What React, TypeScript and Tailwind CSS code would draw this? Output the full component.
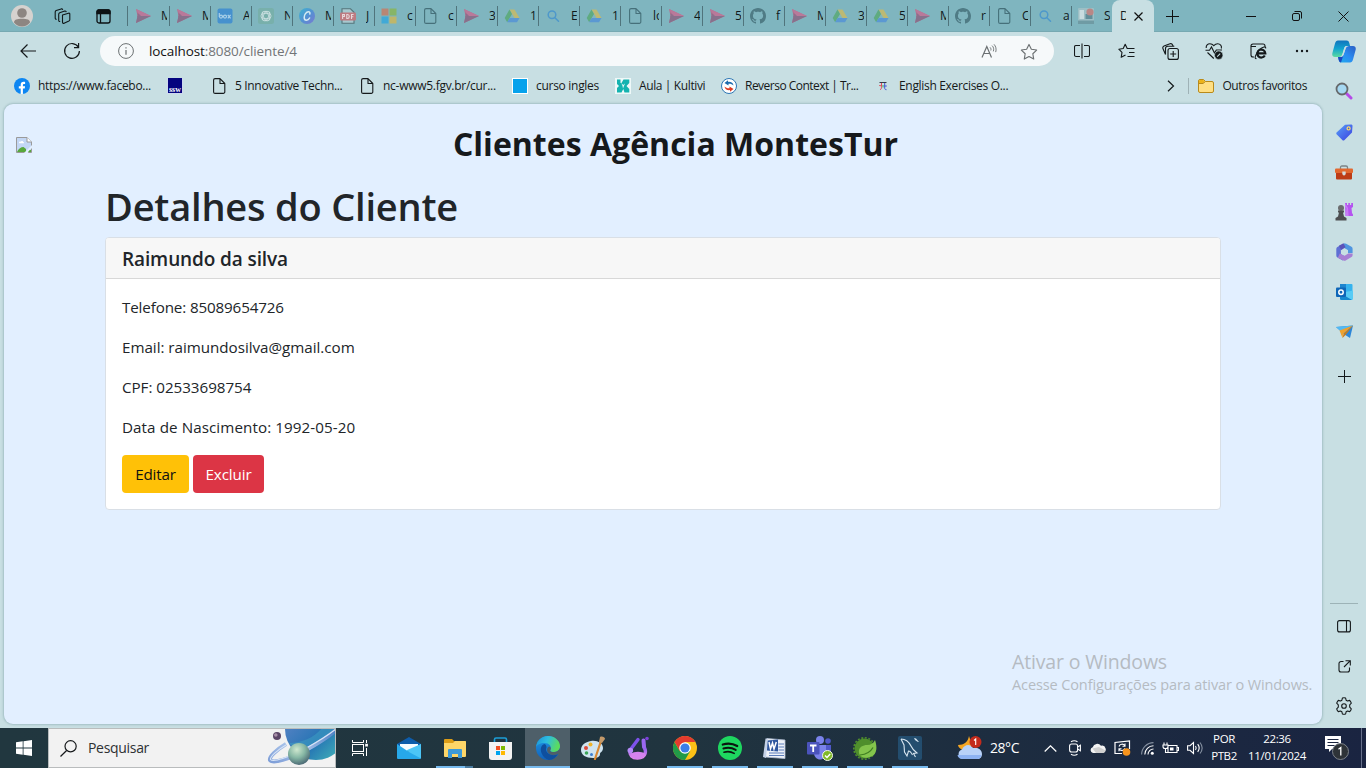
import type { ReactNode } from "react";

/* ---------- favicons ---------- */

const Kite = () => (
  <svg width="16" height="16" viewBox="0 0 16 16">
    <path d="M1 1 16 8 1 15l1.500-7z" fill="#b5708f" />
    <path d="M1 1 16 8H5z" fill="#b9799a" />
    <path d="M1 15 2.500 8 16 8z" fill="#87718c" />
    <path d="M2.500 5 6 7.500 2.500 9z" fill="#8f6f8b" />
  </svg>
);
const Drive = () => (
  <svg width="16" height="16" viewBox="0 0 16 16">
    <path d="M5.500 1.500h5L15.500 10h-5z" fill="#bcb974" />
    <path d="M5.500 1.500 8 6 3.200 14.200.700 10z" fill="#5fab80" />
    <path d="M3.200 14.200 5.600 10h9.900L13 14.200z" fill="#5b98d2" />
  </svg>
);
const Box = () => (
  <svg width="16" height="16" viewBox="0 0 16 16">
    <rect x=".5" y=".5" width="15" height="15" rx="2" fill="#4691ce" />
    <g fill="none" stroke="#a9d0e8" strokeWidth="1.2">
      <path d="M2.300 5v4" />
      <circle cx="4" cy="8.600" r="1.500" />
      <circle cx="8" cy="8.600" r="1.500" />
      <path d="m10.800 6.800 2.800 3.600M13.600 6.800l-2.800 3.600" />
    </g>
  </svg>
);
const Gpt = () => (
  <svg width="16" height="16" viewBox="0 0 16 16">
    <rect width="16" height="16" rx="2.500" fill="#78b0ab" />
    <g fill="none" stroke="#c9dfe0" strokeWidth=".9">
      <rect x="3" y="5.400" width="10" height="5.200" rx="2.500" />
      <rect x="3" y="5.400" width="10" height="5.200" rx="2.500" transform="rotate(60 8 8)" />
      <rect x="3" y="5.400" width="10" height="5.200" rx="2.500" transform="rotate(120 8 8)" />
    </g>
  </svg>
);
const Canva = () => (
  <svg width="16" height="16" viewBox="0 0 16 16">
    <defs>
      <linearGradient id="canva" x1="0" y1="0" x2="1" y2="1">
        <stop offset="0" stopColor="#3fb4cf" />
        <stop offset=".5" stopColor="#5292d3" />
        <stop offset="1" stopColor="#7a7ad2" />
      </linearGradient>
    </defs>
    <circle cx="8" cy="8" r="8" fill="url(#canva)" />
    <path d="M10.800 6c.5-1.400-.2-2.200-1.400-2.200-2.200 0-4.200 3-4.200 5.600 0 1.700.8 2.800 2.200 2.800 1.300 0 2.500-.9 3.200-2.200" fill="none" stroke="#d5ebf2" strokeWidth="1.500" strokeLinecap="round" />
  </svg>
);
const Pdf = () => (
  <svg width="16" height="16" viewBox="0 0 16 16">
    <path d="M2 5V.8h8.500L14 4.300V5M2 12v3.200h12V12" fill="#a7c9cf" stroke="#54747b" strokeWidth="1.100" />
    <rect x="0" y="4.500" width="16" height="8" rx="1" fill="#bd7b81" />
    <g fill="none" stroke="#e8d9dc" strokeWidth="1.100">
      <path d="M2.600 11V6.500h1.800v2H2.600M6.800 6.500v4h.8c2.200 0 2.200-4 0-4zM13.600 6.500h-2.100V11M11.500 8.700h1.800" />
    </g>
  </svg>
);
const MsLogo = () => (
  <svg width="16" height="16" viewBox="0 0 16 16">
    <path d="M.5.500h7v7h-7z" fill="#b88674" />
    <path d="M8.500.500h7v7h-7z" fill="#87b567" />
    <path d="M.5 8.500h7v7h-7z" fill="#41a9d6" />
    <path d="M8.500 8.500h7v7h-7z" fill="#bfb66a" />
  </svg>
);
const Doc = ({ color = "#46707a" }: { color?: string }) => (
  <svg width="16" height="16" viewBox="0 0 16 16" fill="none" stroke={color} strokeWidth="1.100" strokeLinejoin="round">
    <path d="M4.100.600H9l4.800 4.900v8.400a1.500 1.500 0 0 1-1.500 1.500H4.100a1.500 1.500 0 0 1-1.500-1.500V2.100A1.500 1.500 0 0 1 4.100.600zM9 .600v4.900h4.800" />
  </svg>
);
const Search = () => (
  <svg width="16" height="16" viewBox="0 0 16 16" fill="none" stroke="#4e98cb" strokeWidth="1.500" strokeLinecap="round">
    <circle cx="7" cy="6.800" r="3.800" />
    <path d="m9.900 9.700 3.600 3.600" />
  </svg>
);
const Github = () => (
  <svg width="16" height="16" viewBox="0 0 16 16">
    <path fill="#4f7b85" d="M8 0C3.580 0 0 3.580 0 8c0 3.540 2.290 6.530 5.470 7.590.4.070.55-.17.55-.38 0-.19-.01-.82-.01-1.490-2.010.37-2.530-.49-2.690-.94-.09-.23-.48-.94-.82-1.130-.28-.15-.68-.52-.01-.53.63-.01 1.080.58 1.230.82.72 1.210 1.870.87 2.330.66.070-.52.28-.87.51-1.070-1.780-.2-3.640-.89-3.640-3.950 0-.87.31-1.590.82-2.150-.08-.2-.36-1.020.08-2.120 0 0 .67-.21 2.200.82.64-.18 1.320-.27 2-.27s1.360.09 2 .27c1.530-1.040 2.200-.82 2.200-.82.44 1.100.16 1.920.08 2.120.51.56.82 1.270.82 2.150 0 3.070-1.870 3.750-3.650 3.950.29.25.54.73.54 1.480 0 1.070-.01 1.930-.01 2.200 0 .21.15.46.55.38A8.010 8.010 0 0 0 16 8c0-4.420-3.580-8-8-8z" />
  </svg>
);
const Panel = () => (
  <svg width="16" height="16" viewBox="0 0 16 16">
    <rect width="16" height="16" rx="1" fill="#9dbfc5" />
    <path d="M1.500 2h4.500v9H1.500z" fill="#c9dcdf" />
    <path d="M7.500 6h7v5h-7z" fill="#628e99" />
    <path d="M0 12.500h16V16H0z" fill="#6f9ba4" />
    <circle cx="12" cy="4" r="3.600" fill="#b98786" />
  </svg>
);

const tabs: { icon: ReactNode; label: string }[] = [
  { icon: <Kite />, label: "M" },
  { icon: <Kite />, label: "M" },
  { icon: <Box />, label: "A" },
  { icon: <Gpt />, label: "N" },
  { icon: <Canva />, label: "M" },
  { icon: <Pdf />, label: "J" },
  { icon: <MsLogo />, label: "c" },
  { icon: <Doc />, label: "c" },
  { icon: <Kite />, label: "3" },
  { icon: <Drive />, label: "1" },
  { icon: <Search />, label: "E" },
  { icon: <Drive />, label: "1" },
  { icon: <Doc />, label: "lo" },
  { icon: <Kite />, label: "4" },
  { icon: <Kite />, label: "5" },
  { icon: <Github />, label: "f" },
  { icon: <Kite />, label: "M" },
  { icon: <Drive />, label: "3" },
  { icon: <Drive />, label: "5" },
  { icon: <Kite />, label: "M" },
  { icon: <Github />, label: "r" },
  { icon: <Doc />, label: "C" },
  { icon: <Search />, label: "a" },
  { icon: <Panel />, label: "S" },
];

function TabBar() {
  return (
    <div className="flex h-8 shrink-0 bg-[#7fb5bf] shadow-[inset_0_-1px_0_#77a9b2]">
      <div className="flex w-11 items-center justify-center">
        <svg width="22" height="22" viewBox="0 0 22 22">
          <circle cx="11" cy="11" r="11" fill="#d6d2cf" />
          <circle cx="11" cy="8" r="4.800" fill="#8d8682" />
          <path d="M3 17.500c0-3 3-3.800 8-3.800s8 .8 8 3.800A11 11 0 0 1 11 21.500a11 11 0 0 1-8-4z" fill="#8d8682" />
        </svg>
      </div>
      <div className="flex w-9 items-center justify-center">
        <svg width="17" height="17" viewBox="0 0 17 17" fill="none" stroke="#10181a" strokeWidth="1.100" strokeLinejoin="round">
          <path d="m8.500 7 6-1.800c.8-.2 1.300.1 1.300.9v5.600c0 .6-.3 1-.9 1.300l-4.800 2.200c-.9.400-1.600 0-1.600-.9z" />
          <path d="M6.200 13.500c-1 .2-1.500-.3-1.500-1.200V6.200c0-.7.300-1.200 1-1.500l5-1.600c.8-.2 1.400.1 1.500 1" />
          <path d="M2.700 11.200c-1 .2-1.500-.3-1.500-1.200V4c0-.7.300-1.200 1-1.500l5-1.600c.8-.2 1.400.1 1.500 1" />
        </svg>
      </div>
      <div className="flex w-[47px] items-center justify-center pr-px">
        <svg width="15" height="15" viewBox="0 0 15 15" fill="none" stroke="#0d1214" strokeWidth="1.300">
          <rect x="1" y="1" width="13" height="13" rx="2" />
          <path d="M1 2.500A1.500 1.500 0 0 1 2.500 1h10A1.500 1.500 0 0 1 14 2.500V4.500H1z" fill="#0d1214" />
          <path d="M4.500 4.500V14" />
        </svg>
      </div>
      <div className="flex w-[985px] pl-px">
        {tabs.map((t, i) => (
          <div key={i} className="flex h-8 w-[41px] shrink-0 items-center">
            <div className={`h-5 w-px bg-[#50747c] ${i === 0 ? "-ml-px mr-px" : ""}`} />
            <div className="ml-1.5">{t.icon}</div>
            <div className="ml-[10px] w-[6px] overflow-hidden text-xs text-[#10191b]">{t.label}</div>
          </div>
        ))}
      </div>
      <div className="-mr-[2px] flex h-8 w-[42px] items-center rounded-t-lg bg-[#c8dfe3] pl-2">
        <div className="w-[6px] overflow-hidden text-xs text-[#10191b]">D</div>
        <svg className="ml-2" width="9" height="9" viewBox="0 0 9 9" stroke="#111" strokeWidth="1.200">
          <path d="m.5.500 8 8M8.500.500l-8 8" />
        </svg>
      </div>
      <div className="ml-[3px] flex w-[34px] items-center justify-center">
        <svg width="13" height="13" viewBox="0 0 13 13" stroke="#111">
          <path d="M6.500 0v13M0 6.500h13" />
        </svg>
      </div>
      <div className="ml-auto flex">
        <div className="flex w-[46px] items-center justify-center">
          <svg width="10" height="10" viewBox="0 0 10 10" stroke="#111">
            <path d="M0 5.500h10" />
          </svg>
        </div>
        <div className="flex w-[46px] items-center justify-center">
          <svg width="10" height="10" viewBox="0 0 10 10" stroke="#111" fill="none">
            <rect x=".5" y="2.500" width="7" height="7" rx="1.500" />
            <path d="M2.500.500H8a1.500 1.500 0 0 1 1.500 1.500v5.500" />
          </svg>
        </div>
        <div className="flex w-[46px] items-center justify-center">
          <svg width="11" height="11" viewBox="0 0 11 11" stroke="#111">
            <path d="m.5.500 10 10M10.500.500l-10 10" />
          </svg>
        </div>
      </div>
    </div>
  );
}

/* ---------- toolbar ---------- */

const Slot = ({ children }: { children: ReactNode }) => (
  <div className="flex w-11 items-center justify-center">{children}</div>
);

function Toolbar() {
  return (
    <div className="flex h-[38px] shrink-0 items-stretch pl-1.5">
      <Slot>
        <svg width="16" height="14" viewBox="0 0 16 14" fill="none" stroke="#14191b" strokeWidth="1.200">
          <path d="M7.500.500 1 7l6.500 6.500M1 7h15" />
        </svg>
      </Slot>
      <Slot>
        <svg width="18" height="18" viewBox="0 0 18 18" fill="none" stroke="#14191b" strokeWidth="1.200">
          <path d="M15.400 5.200A7.400 7.400 0 1 0 16.400 9M15.600 1v4.600H11" />
        </svg>
      </Slot>
      <div className="mt-1 ml-1.5 flex h-[30px] w-[954px] items-center rounded-full bg-[#f6f9fa] pr-4 pl-[18px]">
        <svg width="16" height="16" viewBox="0 0 16 16" fill="none" stroke="#6b7072">
          <circle cx="8" cy="8" r="7.400" />
          <path d="M8 7v4.800M8 4.200v1.400" strokeWidth="1.200" />
        </svg>
        <span className="ml-[15px] text-[13.5px] tracking-[-0.09px] whitespace-nowrap text-[#727577]">
          <span className="text-[#111]">localhost</span>:8080/cliente/4
        </span>
        <svg className="ml-auto" width="16" height="14" viewBox="0 0 16 14" fill="none" stroke="#6b7072">
          <path d="M1 13.500 5.800 2.500l4.700 11M2.800 9.500h6" strokeWidth="1.200" />
          <path d="M9 3.300c1 1 1.200 2.200.8 3.200M11 1.600c1.700 1.500 2.100 3.700 1.300 5.800M13 .300c1.900 2 2.600 4.800 1.700 7.800" strokeWidth=".9" />
        </svg>
        <svg className="ml-[23px]" width="18" height="17" viewBox="0 0 16 15" fill="none" stroke="#6b7072" strokeLinejoin="round">
          <path d="M8 1.200l2.100 4.300 4.700.7-3.400 3.300.8 4.700L8 12l-4.200 2.200.8-4.700L1.200 6.200l4.700-.7z" />
        </svg>
      </div>
      <div className="ml-[6px] flex">
        <Slot>
          <svg width="16" height="16" viewBox="0 0 16 16" fill="none" stroke="#14191b">
            <path d="M6 2.500H2a1.500 1.500 0 0 0-1.500 1.500v8a1.500 1.500 0 0 0 1.500 1.500H6M10 2.500h4A1.500 1.500 0 0 1 15.500 4v8a1.500 1.500 0 0 1-1.500 1.500H10M8 .500v15" strokeWidth="1.100" />
          </svg>
        </Slot>
        <Slot>
          <svg width="17" height="16" viewBox="0 0 17 16" fill="none" stroke="#14191b" strokeWidth="1.100" strokeLinejoin="round">
            <path d="M9.800 5.500h-.6L7.200 1.200 5.200 5.500.8 6.200l3.200 3.200-.8 4.900 4.300-2.300M9.500 5.500h7M11 9.500h5.500M9.500 13.500h7" />
          </svg>
        </Slot>
        <Slot>
          <svg width="17" height="17" viewBox="0 0 17 17" fill="none" stroke="#14191b" strokeWidth="1.100">
            <rect x="6" y="5.500" width="10.400" height="10.900" rx="2" />
            <path d="M11.200 8v6M8.200 11h6M3.500 11.500 1 5.800c-.5-1.200-.2-2.100 1-2.700L8 .800c1.200-.4 2.100 0 2.600 1.100l.6 1.300M3.500 11.500V5.500A2.300 2.300 0 0 1 5.800 3.200h6.500" />
          </svg>
        </Slot>
        <Slot>
          <svg width="18" height="18" viewBox="0 0 18 18" fill="none" stroke="#14191b" strokeWidth="1.100">
            <path d="M1.200 6C.9 3.500 2.700 1.700 4.900 1.700c1.500 0 2.900.8 3.900 2 1-1.200 2.400-2 3.900-2 2.400 0 4.400 2 3.600 4.800M2.500 10.500l6.300 6M.5 8.300h4L6.500 5l3 6 1.800-3h5.700" />
            <circle cx="13.700" cy="13.200" r="4.200" fill="#14191b" stroke="#c8dfe3" strokeWidth=".6" />
            <path d="m12.200 14.700 3-3" stroke="#c8dfe3" />
          </svg>
        </Slot>
        <Slot>
          <svg width="17" height="17" viewBox="0 0 17 17" fill="none" stroke="#14191b" strokeWidth="1.100">
            <path d="M4 14H3a2 2 0 0 1-2-2V3a2 2 0 0 1 2-2h10a2 2 0 0 1 2 2v1M1 3.500h5" />
            <path d="M14.800 12.500A4 4 0 1 1 15.300 10.300H8" strokeWidth="2.200" />
            <path d="M6.500 15.500c-2.800 1-.8-5 2.700-8.500s7-3.800 6.500-1.500" />
          </svg>
        </Slot>
        <Slot>
          <svg width="14" height="4" viewBox="0 0 14 4" fill="#14191b">
            <circle cx="2" cy="2" r="1.200" />
            <circle cx="7" cy="2" r="1.200" />
            <circle cx="12" cy="2" r="1.200" />
          </svg>
        </Slot>
      </div>
      <div className="flex w-10 items-center justify-center">
        <svg width="24" height="23" viewBox="0 0 24 23">
          <defs>
            <linearGradient id="cp1" x1="0" y1="0" x2="0" y2="1">
              <stop offset="0" stopColor="#1173bd" />
              <stop offset=".5" stopColor="#12a3cf" />
              <stop offset="1" stopColor="#5adba0" />
            </linearGradient>
            <linearGradient id="cp2" x1="1" y1="0" x2="0" y2="1">
              <stop offset="0" stopColor="#2a5fc4" />
              <stop offset=".5" stopColor="#2b8af0" />
              <stop offset="1" stopColor="#1fb0ee" />
            </linearGradient>
          </defs>
          <path d="M6 .500h8.500c1.700 0 2.300.8 2.800 2.500l.8 3h-3c-1.800 0-2.500.8-3 2.500L10.500 14c-.6 1.800-1.500 3-3.300 3H3C.8 17-.2 15.500.4 13L3 3.500C3.500 1.600 4.500.500 6 .500z" fill="url(#cp1)" />
          <path d="M18 22.500H9.500c-1.700 0-2.300-.8-2.800-2.500L6 17h2.500c1.800 0 2.700-.8 3.200-2.500L13.500 9c.6-1.800 1.500-3 3.300-3H21c2.200 0 3.200 1.500 2.600 4L21 19.500c-.5 1.900-1.500 3-3 3z" fill="url(#cp2)" />
          <path d="M6 17h2c2 0 3-.8 3.600-2.500l.6-1.800L9 22.400c-1.300-.2-1.900-1-2.300-2.400z" fill="#1b49c0" />
          <path d="M15 6h2c-2 0-3 1-3.600 3l-1.800 5.500c-.5 1.500-1.200 2.300-2.600 2.500H7.300c1.700 0 2.600-1.200 3.200-3l1.600-5.500C12.600 6.800 13.300 6 15 6z" fill="#c8dfe3" />
        </svg>
      </div>
    </div>
  );
}

/* ---------- bookmarks ---------- */

const Bookmark = ({ icon, children }: { icon: ReactNode; children?: ReactNode }) => (
  <div className="flex items-center gap-2 whitespace-nowrap">
    {icon}
    {children}
  </div>
);

function Bookmarks() {
  return (
    <div className="flex h-[34px] shrink-0 items-center pb-[2px] pl-[14px] text-xs text-[#16191a]">
      <Bookmark
        icon={
          <svg width="16" height="16" viewBox="0 0 16 16">
            <circle cx="8" cy="8" r="8" fill="#0d86f2" />
            <path d="M6.700 16v-5.400H4.800V8.300h1.900V6.700c0-2 1-3 2.900-3 .6 0 1.200.1 1.500.2v2h-1c-.9 0-1.200.4-1.200 1.200v1.200h2.200l-.4 2.300H8.900V16z" fill="#fff" />
          </svg>
        }
      >
        <span className="w-[129px] tracking-[-0.3px]">https://www.facebo...</span>
      </Bookmark>
      <Bookmark
        icon={
          <div className="flex size-4 items-end justify-center border-x border-b border-[#cfd8ef] bg-[#04047f] font-['Liberation_Serif',serif] text-[8px] leading-[7px] font-bold text-white">
            ssw
          </div>
        }
      />
      <div className="ml-7">
        <Bookmark icon={<Doc color="#15191b" />}>
          <span className="w-[124px] tracking-[-0.33px]">5 Innovative Techn...</span>
        </Bookmark>
      </div>
      <Bookmark icon={<Doc color="#15191b" />}>
        <span className="w-[129px] tracking-[-0.28px]">nc-www5.fgv.br/cur...</span>
      </Bookmark>
      <Bookmark icon={<div className="size-4 border border-white bg-[#06a2ec]" />}>
        <span className="w-[79px] tracking-[-0.29px]">curso ingles</span>
      </Bookmark>
      <Bookmark
        icon={
          <svg width="16" height="16" viewBox="0 0 16 16">
            <path d="M0 0h16v16H0z" fill="#eef8f8" />
            <path d="M2 1.500H5.500V5h1L8.500 1.500h5.800V5L11.500 8l2.800 3v3.500H9.500L8.300 11l-1.800 3.500H2V10l2-2-2-2z" fill="#14b3b0" />
            <path d="m6.300 5 1.900 2L10 5.500 8.800 8.500 8 10.500 7.500 8z" fill="#e5f7f6" />
          </svg>
        }
      >
        <span className="w-[82px] tracking-[-0.38px]">Aula | Kultivi</span>
      </Bookmark>
      <Bookmark
        icon={
          <svg width="16" height="16" viewBox="0 0 16 16">
            <circle cx="8" cy="8" r="7.500" fill="#fff" stroke="#2c76b4" />
            <path d="M12.500 7.500c-.3-2.700-2.500-3.900-5.500-3.600V2.200L3.500 5l4 2.500V5.800c2-.2 3.500.3 5 1.700z" fill="#1d6cae" />
            <path d="M3.500 8.500c.3 2.700 2.500 3.900 5.500 3.600v1.700l3.500-2.800-4-2.500v1.700c-2 .2-3.500-.3-5-1.700z" fill="#de3b22" />
          </svg>
        }
      >
        <span className="w-[130px] tracking-[-0.52px]">Reverso Context | Tr...</span>
      </Bookmark>
      <Bookmark
        icon={
          <svg width="16" height="16" viewBox="0 0 16 16" fill="none">
            <path d="M4.500 4.500h7" stroke="#353b46" />
            <path d="M6.500 5v3.500c0 2-.4 3-1.500 3.200M4.200 7.500l3 .5" stroke="#de4b57" />
            <path d="M9.700 5v5c0 1.200.5 1.700 1.800 1.700M8.800 8h3" stroke="#4656d6" />
            <path d="M8 7v2.500" stroke="#35b56b" />
          </svg>
        }
      >
        <span className="tracking-[-0.32px]">English Exercises O...</span>
      </Bookmark>
      <div className="ml-auto flex items-center pr-[15px]">
        <svg width="8" height="12" viewBox="0 0 8 12" fill="none" stroke="#14191b" strokeWidth="1.200">
          <path d="m1 .700 5.500 5.300L1 11.300" />
        </svg>
        <div className="mr-[9px] ml-[13px] h-4 w-px bg-[#9fb2b6]" />
        <svg width="16" height="14" viewBox="0 0 16 14">
          <path d="M.5 2A1.500 1.500 0 0 1 2 .500h3.500L7.500 2.500H14A1.500 1.500 0 0 1 15.500 4v8a1.500 1.500 0 0 1-1.500 1.500H2A1.500 1.500 0 0 1 .5 12z" fill="#ffdf83" stroke="#b98a1a" />
          <path d="M1 2c0-.7.500-1 1-1h3.300l1.500 1.500-1.500 1.600H1z" fill="#edb319" />
          <path d="M.5 4.500H5l2.500-2" fill="none" stroke="#b98a1a" />
        </svg>
        <span className="ml-2 tracking-[-0.4px] whitespace-nowrap">Outros favoritos</span>
      </div>
    </div>
  );
}

/* ---------- page ---------- */

const details = [
  { text: "Telefone: 85089654726", cls: "tracking-[-0.14px]" },
  { text: "Email: raimundosilva@gmail.com", cls: "tracking-[-0.03px]" },
  { text: "CPF: 02533698754", cls: "tracking-[-0.04px]" },
  { text: "Data de Nascimento: 1992-05-20", cls: "tracking-[0.08px]" },
];

function Page() {
  return (
    <main className="relative ml-1 flex h-[620px] w-[1318px] flex-col rounded-[9px] bg-[#e2efff] text-[#212529] shadow-[0_0_2px_1px_rgba(120,155,162,0.45)]">
      <div className="flex h-20 items-center">
        <svg className="mt-[2px] ml-3 shrink-0" width="16" height="16" viewBox="0 0 16 16">
          <path d="M.5.500h10.500l4.500 4.500v10.500H.5z" fill="#c3d7f5" stroke="#9a9a9a" />
          <path d="M11 .500V5h4.500" fill="#fff" stroke="#9a9a9a" />
          <path d="M3 5.800c0-1 1-1.400 1.600-1.100.6-1.200 2.400-1 2.600.2.900 0 1.200.9.500 1.400H3.300z" fill="#fff" />
          <path d="M1 15c1.500-3.500 4-5 6.500-5l2.500 2v3z" fill="#58a83c" />
          <path d="M16.500 7.500 7.500 16.500h3.800l5.200-6z" fill="#e2efff" />
          <path d="M12 15l2-2.200 1 .2v2z" fill="#58a83c" />
        </svg>
        <h1 className="w-[1287px] text-center text-[32px] leading-10 font-bold tracking-[0.02px] whitespace-nowrap text-[#16191c]">
          Clientes Agência MontesTur
        </h1>
      </div>
      <div className="ml-[101px] w-[1116px]">
        <h2 className="h-[53px] text-[38px] leading-[45px] font-semibold tracking-[-0.2px]">Detalhes do Cliente</h2>
        <section className="flex h-[273px] flex-col overflow-hidden rounded border border-[#d9dfe6] bg-white">
          <h3 className="flex h-[41px] items-center border-b border-[#d8d8d8] bg-[#f7f7f7] px-4 pt-[2px] text-[19px] font-semibold tracking-[-0.11px]">
            Raimundo da silva
          </h3>
          <div className="flex flex-col gap-4 p-4 text-[15.2px] leading-6">
            {details.map((d) => (
              <p key={d.text} className={d.cls}>
                {d.text}
              </p>
            ))}
            <div className="flex gap-1">
              <button className="h-[38px] w-[67px] rounded bg-[#ffc107] tracking-[-0.2px] text-[#111]">Editar</button>
              <button className="h-[38px] w-[71px] rounded bg-[#dc3545] tracking-[-0.12px] text-white">Excluir</button>
            </div>
          </div>
        </section>
      </div>
      <div className="absolute top-[545px] left-[1008px] whitespace-nowrap text-[#b5bbc2]">
        <div className="text-[19.5px] leading-[26px] tracking-[-0.16px]">Ativar o Windows</div>
        <div className="text-[14.5px] leading-5 tracking-[-0.11px]">Acesse Configurações para ativar o Windows.</div>
      </div>
    </main>
  );
}

/* ---------- sidebar ---------- */

const SideSlot = ({ children }: { children: ReactNode }) => (
  <div className="flex h-10 items-center justify-center">{children}</div>
);

function Sidebar() {
  return (
    <aside className="flex w-11 flex-col">
      <div className="flex h-[42px] items-center justify-center">
        <svg width="18" height="18" viewBox="0 0 18 18">
          <path d="m11.500 11.500 4.500 4.500" stroke="#b54ae8" strokeWidth="3" strokeLinecap="round" />
          <circle cx="7" cy="7" r="5.500" fill="#a5d8f2" stroke="#66696b" strokeWidth="1.800" />
        </svg>
      </div>
      <SideSlot>
        <svg width="17" height="17" viewBox="0 0 17 17">
          <defs>
            <linearGradient id="tag" x1="0" y1="0" x2="1" y2="1">
              <stop offset="0" stopColor="#59a0f7" />
              <stop offset="1" stopColor="#3a3fe0" />
            </linearGradient>
          </defs>
          <path d="M9 .800 15 .500c1 0 1.500.5 1.500 1.500L16 8.500 8.500 16c-.7.700-1.500.7-2.200 0L.8 10.500c-.7-.7-.7-1.500 0-2.200z" fill="url(#tag)" />
          <circle cx="12.600" cy="4.400" r="1.500" fill="#3b5bd8" stroke="#ffd96b" strokeWidth="1.300" />
        </svg>
      </SideSlot>
      <SideSlot>
        <svg width="18" height="15" viewBox="0 0 18 15">
          <path d="M5.500 4V2.500c0-1 .5-1.500 1.500-1.500h4c1 0 1.500.5 1.500 1.500V4" fill="none" stroke="#7b8486" strokeWidth="1.300" />
          <rect x="0" y="3.500" width="18" height="4.500" rx="1" fill="#e2682f" />
          <path d="M1 8h16v5.500a1 1 0 0 1-1 1H2a1 1 0 0 1-1-1z" fill="#bd3c16" />
          <path d="M7.300 6.500h3.400v2.800L9 10.700 7.300 9.300z" fill="#d5dadb" />
        </svg>
      </SideSlot>
      <SideSlot>
        <svg width="18" height="18" viewBox="0 0 18 18">
          <path d="M10 0h2v2h1.300V0h1.600v2h1.300V0H18v4l-1.500 1 .5 5 1 1.500v1.500h-7.500z" fill="#b553f0" />
          <path d="M10 0v4l1.500 1-.8 8h3L13 5z" fill="#c77bf7" />
          <circle cx="6" cy="5" r="3" fill="#6a6c6e" />
          <path d="M3 7.500h6V9.500H8l1 4 2.500 1.500v2.500H.5V15L3 13.500l1-4H3z" fill="#4d4f51" />
        </svg>
      </SideSlot>
      <SideSlot>
        <svg width="17" height="18" viewBox="0 0 17 18" fill="none" strokeWidth="4.600" strokeLinejoin="round">
          <path d="M8 15.500 2.600 12.400V6L6.500 3.600" stroke="#5f6fd4" />
          <path d="M7.500 2.600 9 2.700 14.300 5.800V10" stroke="#4f95e0" />
          <path d="M2.800 12.600 8.500 15.500 14.300 12V10.500" stroke="#a77fd4" />
          <path d="M4 4.800 8.500 2.300" stroke="#5a52b8" />
        </svg>
      </SideSlot>
      <SideSlot>
        <svg width="17" height="16" viewBox="0 0 17 16">
          <path d="M4 0h11.500a1 1 0 0 1 1 1v8H4z" fill="#36b3ee" />
          <path d="M4 0h6v5H4z" fill="#1d85cf" />
          <path d="M4 9 17 6.500V14.500a1.500 1.500 0 0 1-1.500 1.500h-10A1.500 1.500 0 0 1 4 14.500z" fill="#57cbf5" />
          <path d="m4 9 12 7H5.500A1.500 1.500 0 0 1 4 14.500z" fill="#1588cf" />
          <rect x="0" y="3.500" width="10" height="9.500" rx="1" fill="#0e66b8" />
          <circle cx="5" cy="8.200" r="2.200" fill="none" stroke="#fff" strokeWidth="1.500" />
        </svg>
      </SideSlot>
      <SideSlot>
        <svg width="17" height="14" viewBox="0 0 17 14">
          <path d="M0 2 17 .500 14 13 8.500 9.500z" fill="#2c86d8" />
          <path d="M0 2 17 .500 4.500 6z" fill="#52baf4" />
          <path d="M3.500 5.500 17 .500 7 9l-.5 4z" fill="#f0a22c" />
          <path d="M17 .500 7.500 9 6.500 13l3-3z" fill="#c97c1a" />
        </svg>
      </SideSlot>
      <div className="flex h-12 items-center justify-center">
        <svg width="13" height="13" viewBox="0 0 13 13" stroke="#14191b">
          <path d="M6.500 0v13M0 6.500h13" />
        </svg>
      </div>
      <div className="mx-2 mt-auto h-px bg-[#9db3b7]" />
      <div className="flex flex-col pt-[2px] pb-[2px]">
        <SideSlot>
          <svg width="14" height="13" viewBox="0 0 14 13" fill="none" stroke="#14191b" strokeWidth="1.100">
            <rect x=".6" y=".6" width="12.800" height="11.300" rx="2" />
            <path d="M9.500.6v11.300" />
          </svg>
        </SideSlot>
        <SideSlot>
          <svg width="13" height="13" viewBox="0 0 13 13" fill="none" stroke="#14191b" strokeWidth="1.100">
            <path d="M5.500 1.500H3A2 2 0 0 0 1 3.500v6.500a2 2 0 0 0 2 2h6.500a2 2 0 0 0 2-2V7.500M7.500.700h4.800v4.800M12.300.700 6 7" />
          </svg>
        </SideSlot>
        <SideSlot>
          <svg width="18" height="18" viewBox="0 0 18 18" fill="none" stroke="#14191b" strokeWidth="1.100" strokeLinejoin="round">
            <circle cx="9" cy="9" r="2.300" />
            <path d="M7.400 1c1-.3 2.200-.3 3.200 0l.5 2.200 1.400.8 2.200-.6c.8.800 1.300 1.700 1.600 2.800L14.700 7.800v2.400l1.600 1.600c-.3 1.100-.8 2-1.600 2.800l-2.200-.6-1.400.8-.5 2.200c-1 .3-2.200.3-3.200 0l-.5-2.200-1.400-.8-2.200.6c-.8-.8-1.300-1.700-1.600-2.800l1.600-1.600V7.800L1.700 6.200c.3-1.100.8-2 1.600-2.800l2.200.6 1.400-.8z" />
          </svg>
        </SideSlot>
      </div>
    </aside>
  );
}

/* ---------- taskbar ---------- */

const TaskIcon = ({ children, cls = "", running = false }: { children: ReactNode; cls?: string; running?: boolean }) => (
  <div className={`flex w-[45px] shrink-0 flex-col items-center justify-between ${cls}`}>
    <div className="flex h-[38px] items-center pt-[2px]">{children}</div>
    {running && <div className="h-[2px] w-9 bg-[#76b9ed]" />}
  </div>
);

function Taskbar() {
  return (
    <footer className="flex h-10 shrink-0 items-stretch overflow-hidden bg-gradient-to-r from-[#21373f] via-[#20343f] to-[#1a2441] text-white">
      <div className="flex w-12 shrink-0 items-center justify-center">
        <svg width="16" height="16" viewBox="0 0 16 16" fill="#fff">
          <path d="M0 2.200 6.700 1.300v6.300H0zM7.500 1.200 16 0v7.600H7.500zM0 8.400h6.700v6.300L0 13.800zM7.500 8.400H16V16l-8.500-1.200z" />
        </svg>
      </div>
      <div className="flex w-[288px] shrink-0 items-center overflow-hidden border border-[#b9bcbd] bg-[#f2f2f2]">
        <svg className="ml-[11px]" width="17" height="17" viewBox="0 0 17 17" fill="none" stroke="#16191b" strokeWidth="1.200">
          <circle cx="10.600" cy="6.300" r="5.600" />
          <path d="M6.600 10.500.500 16.500" />
        </svg>
        <span className="ml-[11px] text-sm tracking-[-0.31px] text-[#2d3133]">Pesquisar</span>
        <svg className="ml-auto -mr-px" width="70" height="40" viewBox="0 0 70 40">
          <defs>
            <linearGradient id="planet" x1="0" y1="0" x2="1" y2="1">
              <stop offset=".3" stopColor="#4a7fc0" />
              <stop offset=".6" stopColor="#2574b4" />
              <stop offset="1" stopColor="#48c0b8" />
            </linearGradient>
            <linearGradient id="ring" x1="0" y1="1" x2="1" y2="0">
              <stop offset="0" stopColor="#7f9fd8" />
              <stop offset=".4" stopColor="#a9c3ea" />
              <stop offset="1" stopColor="#3f76bf" />
            </linearGradient>
            <radialGradient id="moon" cx=".4" cy=".3" r=".75">
              <stop offset="0" stopColor="#cfe8cf" />
              <stop offset=".5" stopColor="#86b7a4" />
              <stop offset="1" stopColor="#44606f" />
            </radialGradient>
          </defs>
          <circle cx="50" cy="1" r="31" fill="url(#planet)" />
          <path d="M56 0h14v4L40 22c-8 0-14-3-17-7C36 15 49 9 56 0z" fill="#3fa2c4" opacity=".5" />
          <path d="M20 16C10 22 3 29 4 32c2 4 20-1 36-10S65 7 72 0" fill="none" stroke="url(#ring)" strokeWidth="4" />
          <path d="M20 17C11 22 4 29 4.500 31.500c2 3 19-2 35-11S64 6 71 0" fill="none" stroke="#d6e3f6" strokeWidth="1.200" />
          <circle cx="33" cy="26" r="11" fill="url(#moon)" />
          <circle cx="11" cy="8" r="4" fill="#5b4667" />
          <circle cx="9.800" cy="7" r="1.800" fill="#a98fa8" />
        </svg>
      </div>
      <div className="flex w-12 shrink-0 items-center justify-center">
        <svg width="16" height="16" viewBox="0 0 16 16" fill="none" stroke="#fff">
          <path d="M.5 0v2.500h11V0M.5 16v-2.500h11V16" />
          <rect x=".5" y="4.500" width="11" height="7" />
          <path d="M14.500 0v3M14.500 8V16" />
          <path d="M13.200 3.800h2.700v2.700h-2.700z" fill="#fff" stroke="none" />
        </svg>
      </div>
      <TaskIcon cls="ml-[3px] pr-[1px]">
        <svg width="24" height="22" viewBox="0 0 24 22">
          <path d="M0 7 12 0l12 7v3H0z" fill="#0d5cab" />
          <path d="M3 7h18v7H3z" fill="#f5fbff" />
          <path d="M0 7l12 8 12-8v14a1 1 0 0 1-1 1H1a1 1 0 0 1-1-1z" fill="#27a8ea" />
          <path d="M24 7v14.500L9 13.500z" fill="#4cc5f6" />
        </svg>
      </TaskIcon>
      <div className="flex w-[45px] shrink-0 flex-col items-center justify-between">
        <div className="flex h-[38px] items-center pt-[2px]">
          <svg width="22" height="19" viewBox="0 0 22 19">
            <path d="M0 1a1 1 0 0 1 1-1h7l2 2h11a1 1 0 0 1 1 1v4H0z" fill="#dd9d17" />
            <path d="M0 4h9l2-2h10a1 1 0 0 1 1 1v14a1 1 0 0 1-1 1H1a1 1 0 0 1-1-1z" fill="#fed668" />
            <path d="M4 19v-8a1 1 0 0 1 1-1h12a1 1 0 0 1 1 1v8h-4v-4H8v4z" fill="#3d9ad8" />
          </svg>
        </div>
        <div className="flex h-[2px]">
          <div className="w-[29px] bg-[#76b9ed]" />
          <div className="w-2 bg-[#4a7b9f]" />
        </div>
      </div>
      <TaskIcon cls="ml-px">
        <svg width="23" height="23" viewBox="0 0 23 23">
          <path d="M5.500 6V2.500C5.500 1.500 6 1 7 1h9c1 0 1.500.5 1.500 1.500V6" fill="none" stroke="#1d9fd8" strokeWidth="1.600" />
          <path d="M0 5h23v15a3 3 0 0 1-3 3H3a3 3 0 0 1-3-3z" fill="#f3f3f3" />
          <path d="M7 9h4v4H7z" fill="#f25022" />
          <path d="M12 9h4v4h-4z" fill="#7fba00" />
          <path d="M7 14h4v4H7z" fill="#00a4ef" />
          <path d="M12 14h4v4h-4z" fill="#ffb900" />
        </svg>
      </TaskIcon>
      <div className="ml-[2px] flex w-[45px] shrink-0 flex-col items-center justify-between bg-[#4e5f69]">
        <div className="flex h-[38px] items-center pt-[2px]">
          <svg width="24" height="24" viewBox="0 0 24 24">
            <defs>
              <linearGradient id="edgeTop" x1="0" y1="0" x2="1" y2=".3">
                <stop offset="0" stopColor="#1a8fd8" />
                <stop offset=".5" stopColor="#2dbde0" />
                <stop offset="1" stopColor="#5bdb5e" />
              </linearGradient>
              <linearGradient id="edgeBody" x1="0" y1="0" x2="0" y2="1">
                <stop offset="0" stopColor="#1f9ae8" />
                <stop offset="1" stopColor="#1160b8" />
              </linearGradient>
            </defs>
            <circle cx="12" cy="12" r="12" fill="url(#edgeBody)" />
            <path d="M0 11C1 4 6 0 12 0c7 0 12 5 12 10 0 4-3 6-6.500 6-3 0-4-1.200-3-2.700C16 10.500 13 7 8.500 7 4 7 1 9 0 11z" fill="url(#edgeTop)" />
            <path d="M8.500 8C5 9 4 13 5.500 17c1.300 3.500 4 6 7.500 7 4-.3 7-2.500 9-6-2 1.200-4.500 1.500-7 .8-4-1.200-6-4-4.500-7.800C10 9.500 10 8.300 8.500 8z" fill="#0f4f9e" />
            <path d="M24 12v6l-2 0c-2 1-4.800 1.500-7.500.5-2.500-1-4-3.500-3.300-5.800.3-1.200 1.300-2 2.300-2.200 1.400 1 1.700 2 1 3.200-1 1.300.2 2.400 3.200 2.400 3.500 0 5.700-2 6.300-4.100z" fill="#4e5f69" />
          </svg>
        </div>
        <div className="h-[2px] w-full bg-[#76b9ed]" />
      </div>
      <TaskIcon>
        <svg width="24" height="24" viewBox="0 0 24 24">
          <path d="M10 5c6-1 12 2 12 7 0 4-3 4-3 6 0 3-3 4-7 4C5 22 0 19 0 14S4 6 10 5z" fill="#cfe4f0" />
          <circle cx="5" cy="12" r="2" fill="#dd4a39" />
          <circle cx="9.500" cy="8.500" r="2" fill="#f0b429" />
          <circle cx="5.500" cy="17" r="1.800" fill="#3ba557" />
          <circle cx="10.500" cy="18.500" r="1.500" fill="#3b7fd0" />
          <path d="M20 5 14 23" stroke="#d88a34" strokeWidth="2.200" strokeLinecap="round" />
          <path d="M19 1c2-1 5 0 5 2l-3 4-3-1z" fill="#c3996a" />
        </svg>
      </TaskIcon>
      <TaskIcon>
        <svg width="22" height="24" viewBox="0 0 22 24" fill="none" strokeLinecap="round">
          <defs>
            <linearGradient id="flask" x1="0" y1="0" x2="0" y2="1">
              <stop offset="0" stopColor="#8a5cf0" />
              <stop offset="1" stopColor="#e58aec" />
            </linearGradient>
          </defs>
          <path d="M17 11c2 3 3 11-6.500 11C5 22 2.500 19 3 15" stroke="url(#flask)" strokeWidth="3.500" />
          <path d="M3.500 18c4-3 11-3 15 0-1 3.500-4 5-8 5s-6.500-2-7-5z" fill="#d583ee" />
          <path d="M3.500 13.500 11 3.500" stroke="#7d52ea" strokeWidth="3.400" />
          <path d="m16.500 4.500.5 6" stroke="#9a68f0" strokeWidth="4" />
          <circle cx="3.300" cy="14.500" r="2.800" fill="#b58af8" />
          <circle cx="20" cy="2.500" r="1.800" fill="#7b3fd8" />
        </svg>
      </TaskIcon>
      <TaskIcon running cls="ml-[2px]">
        <svg width="24" height="24" viewBox="0 0 24 24">
          <circle cx="12" cy="12" r="12" fill="#fbc116" />
          <path d="M6.800 15 1.600 6A12 12 0 0 0 12 24l5.200-9z" fill="#229a48" />
          <path d="M1.600 6A12 12 0 0 1 22.400 6H12L6.800 15z" fill="#e33b2e" />
          <circle cx="12" cy="12" r="5.800" fill="#fff" />
          <circle cx="12" cy="12" r="4.600" fill="#3b7de8" />
        </svg>
      </TaskIcon>
      <TaskIcon running>
        <svg width="24" height="24" viewBox="0 0 24 24">
          <circle cx="12" cy="12" r="12" fill="#1ed760" />
          <g fill="none" stroke="#0b1510" strokeLinecap="round">
            <path d="M4.800 8.500c4.800-1.400 10.300-.9 14.400 1.500" strokeWidth="2.300" />
            <path d="M5.400 12.500c4.200-1.200 8.800-.7 12.300 1.400" strokeWidth="1.900" />
            <path d="M6 16.200c3.600-1 7.200-.6 10.200 1.200" strokeWidth="1.600" />
          </g>
        </svg>
      </TaskIcon>
      <TaskIcon running>
        <svg width="23" height="23" viewBox="0 0 23 23">
          <path d="M4 1.500 22 3v18.500L2 20z" fill="#eef2f8" stroke="#aebbd0" strokeWidth=".8" />
          <path d="M15.500 7H21M15.500 10H21M15.500 13H21M6 16h15M6 18.500h15" stroke="#5b7dbb" />
          <path d="M4.500 3.500 15 2.500V14.500L4 13.500z" fill="#2f579f" />
          <path d="m6 5 1.500 7L9.500 6l1.500 6 2.300-7" fill="none" stroke="#fff" strokeWidth="1.500" />
          <path d="M0 20 2.500 1.500 4.500 1.500 3 21z" fill="#c4d1e6" />
        </svg>
      </TaskIcon>
      <TaskIcon running>
        <svg width="26" height="25" viewBox="0 0 26 25">
          <circle cx="13" cy="4" r="4" fill="#7b83eb" />
          <circle cx="21" cy="5" r="2.800" fill="#5059c9" />
          <path d="M17 9h7v7c0 3-2 5-5 5h-2z" fill="#5059c9" />
          <path d="M7 9h12v8c0 4-3 6.500-6 6.500S7 21 7 17z" fill="#7b83eb" />
          <rect x="0" y="6" width="12.500" height="12.500" rx="1" fill="#4b53bc" />
          <path d="M3 9.500h6.500M6.200 9.500V16" stroke="#fff" strokeWidth="1.800" />
          <circle cx="20.500" cy="19.500" r="5" fill="#81b928" stroke="#f4f8ee" />
          <path d="m18 19.500 2 2 3.200-3.500" fill="none" stroke="#fff" strokeWidth="1.500" />
        </svg>
      </TaskIcon>
      <TaskIcon running>
        <svg width="24" height="24" viewBox="0 0 24 24">
          <circle cx="11.500" cy="12.500" r="10" fill="#4f8f2c" />
          <circle cx="11.500" cy="12.500" r="10.700" fill="none" stroke="#4f8f2c" strokeWidth="1.600" strokeDasharray="2 1.600" />
          <path d="M22 4c3 9 1.500 16-7 17.500-4 .8-7.500-.5-8.500-3C4 12 9.500 9 14 9c4 0 6.500-1.500 8-5z" fill="#83c44c" />
          <path d="M7 19c6-.5 10.500-3 13-7.500" fill="none" stroke="#3f7d22" strokeWidth="1.200" />
        </svg>
      </TaskIcon>
      <TaskIcon running>
        <svg width="24" height="24" viewBox="0 0 24 24">
          <rect width="24" height="24" rx="2" fill="#234d6e" />
          <path d="M3 3c4 0 8 3 10 7 1.500 3.500 3.500 5 6 7l-3.500.500 2 3.500M3 3l3 6 .5 7 2.500 4 1.500-5c2 0 3 2 4 4" fill="none" stroke="#d8e6f0" strokeWidth="1.100" />
          <path d="m16 2 2 .500L21 6l-1.500-.300L17 4z" fill="#d8e6f0" />
        </svg>
      </TaskIcon>
      <div className="ml-auto flex items-center">
        <svg width="26" height="24" viewBox="0 0 26 24">
          <path d="M12 0c-1 6-5 9-11 9 1 6 12 8 14 0z" fill="#f5a623" />
          <path d="M5 23a5 5 0 0 1 0-9.500C7 9 13 7 16 12c5-1 9 2 9 6 0 3-2 5-4.500 5z" fill="#b9d2f8" />
          <path d="M5 23a5 5 0 0 1-4.500-4h24c-.5 2.500-2 4-4 4z" fill="#8eb3f2" />
          <circle cx="18.500" cy="6" r="6" fill="#c42b1c" />
          <path d="M17 4.500 18.700 3v6" fill="none" stroke="#fff" strokeWidth="1.100" />
        </svg>
        <span className="ml-[7px] w-[30px] text-sm tracking-[-0.45px]">28°C</span>
        <svg className="ml-[24px]" width="13" height="7" viewBox="0 0 13 7" fill="none" stroke="#fff" strokeWidth="1.200">
          <path d="m.7 6.500 5.800-5.700 5.800 5.700" />
        </svg>
        <svg className="ml-3" width="12" height="16" viewBox="0 0 12 16" fill="none" stroke="#fff" strokeWidth="1.100">
          <rect x=".6" y="4" width="8" height="8" rx="2" />
          <path d="m8.600 7 2.800-1.800v5.600L8.600 9M2 1.800c2-1.300 4.500-1.300 6.500 0M2 14.200c2 1.300 4.500 1.300 6.500 0" />
        </svg>
        <svg className="ml-[9px]" width="16" height="10" viewBox="0 0 16 10">
          <path d="M3 10a3 3 0 0 1-.3-5.800A4.700 4.700 0 0 1 11 2.800a3.700 3.700 0 0 1 2 7.200z" fill="#f3f3f3" />
          <path d="M6 10 2.500 5.500 9 4l6.500 3.500A3 3 0 0 1 13 10z" fill="#cfcfcf" />
        </svg>
        <svg className="ml-2" width="17" height="16" viewBox="0 0 17 16" fill="none">
          <path d="M8 13.500H1v-11L15.500.800V9" stroke="#fff" strokeWidth="1.200" />
          <path d="M5 6.500a3.200 3.200 0 0 1 5.800-.8M11 3.500v2.700H8.500M10.800 8.300A3.200 3.200 0 0 1 5 9M5 11.300V8.800h2.500" stroke="#fff" strokeWidth="1.100" />
          <circle cx="12.500" cy="12" r="3.800" fill="#f7941d" />
        </svg>
        <svg className="ml-[10px]" width="13" height="13" viewBox="0 0 13 13" fill="none" strokeWidth="1.100">
          <path d="M.6 12.500C.6 6 6 .6 12.500.6" stroke="#8590a0" />
          <path d="M3.800 12.500c0-4.800 3.900-8.700 8.700-8.700M7 12.500C7 9.500 9.500 7 12.500 7" stroke="#fff" />
          <circle cx="11.300" cy="11.300" r="1.500" fill="#fff" />
        </svg>
        <svg className="ml-2" width="17" height="13" viewBox="0 0 17 13" fill="none" stroke="#fff" strokeWidth="1.100">
          <path d="M6 3.500h9v7H6zM15.500 5.500h1v3h-1M2 .500V3M5 .500V3M1 3h5v1.500A2 2 0 0 1 4 6.500H3A2 2 0 0 1 1 4.500zM3.500 6.500v4H6" />
          <path d="M8 5.500h3.500v3H8z" fill="#fff" stroke="none" />
        </svg>
        <svg className="ml-2" width="16" height="14" viewBox="0 0 16 14" fill="none" stroke="#fff" strokeWidth="1.100">
          <path d="M.6 4.700H3L6.500 1.500v11L3 9.300H.6zM8.500 5c.8 1.200.8 2.800 0 4M10.700 3.200c1.800 2.300 1.800 5.300 0 7.600" />
          <path d="M13 1.500c2.600 3.300 2.600 7.700 0 11" stroke="#8590a0" />
        </svg>
        <div className="ml-[7px] flex w-7 flex-col items-center pb-[2px] text-[11.5px] leading-[17px] tracking-[-0.4px]">
          <span>POR</span>
          <span>PTB2</span>
        </div>
        <div className="ml-[9px] flex w-[60px] flex-col items-center pb-[2px] text-[11.5px] leading-[17px] tracking-[-0.32px] whitespace-nowrap">
          <span>22:36</span>
          <span>11/01/2024</span>
        </div>
        <svg className="ml-[18px]" width="26" height="24" viewBox="0 0 26 24">
          <path d="M0 0h16v13H7l-3 3v-3H0z" fill="#fff" />
          <path d="M2.500 3.500h11M2.500 6.500h11M2.500 9.500h7" stroke="#1b2540" />
          <circle cx="15.500" cy="15.500" r="8" fill="#2e3338" stroke="#7c828a" />
          <path d="m13.500 13.200 2.300-1.700v8" fill="none" stroke="#fff" strokeWidth="1.300" />
        </svg>
        <div className="mr-1 ml-[10px] h-10 w-px bg-[#67708a]" />
      </div>
    </footer>
  );
}

export default function App() {
  return (
    <div className="flex h-[768px] w-[1366px] flex-col overflow-hidden bg-[#c8dfe3] font-['Open_Sans',sans-serif]">
      <TabBar />
      <Toolbar />
      <div className="flex grow">
        <div className="flex w-[1322px] flex-col">
          <Bookmarks />
          <Page />
        </div>
        <Sidebar />
      </div>
      <Taskbar />
    </div>
  );
}
